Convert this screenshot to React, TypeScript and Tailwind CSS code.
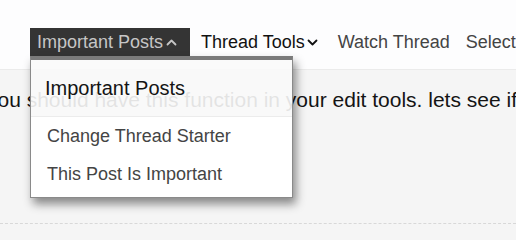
import React from 'react'

function Chevron({ up, className }: { up?: boolean; className?: string }) {
    return (
        <svg width="11" height="7" viewBox="0 0 11 7" className={className} aria-hidden="true">
            <polyline
                points={up ? '1.5,5.5 5.5,1.5 9.5,5.5' : '1.5,1.5 5.5,5.5 9.5,1.5'}
                fill="none"
                stroke="currentColor"
                strokeWidth="1.8"
                strokeLinecap="round"
                strokeLinejoin="round"
            />
        </svg>
    )
}

export default function App() {
    return (
        <div
            className="relative h-[240px] w-[516px] overflow-hidden bg-[#f5f5f5]"
            style={{ fontFamily: '"Liberation Sans", Arial, sans-serif' }}
        >
            {/* top nav */}
            <div className="h-[70px] border-b border-[#ebebeb] bg-[#fdfdfe] pl-[30px] pt-[28px]">
                <div className="flex h-[28px] items-center whitespace-nowrap text-[18px]">
                    <div className="relative">
                        <button className="flex h-[28px] w-[160px] items-center bg-[#343434] pl-[7px] text-[#c6c6c6]">
                            Important Posts
                            <Chevron up className="ml-[3px] mt-[1px]" />
                        </button>

                        {/* dropdown, header is see-through a little */}
                        <div className="absolute left-0 top-[28px] z-10 w-[263px] border-x border-b border-t-4 border-[#8a8a8a] border-t-[#7a7a7a] shadow-[3px_6px_9px_rgba(0,0,0,0.45)]">
                            <div className="flex h-[57px] items-center border-b border-[#ececec] bg-[#fafafa]/90 pl-[14px] text-[20px] text-[#141414]">
                                Important Posts
                            </div>
                            <div className="bg-white pb-[4px] pl-[16px] text-[18px] text-[#444]">
                                <div className="flex h-[38px] items-center">Change Thread Starter</div>
                                <div className="flex h-[38px] items-center">This Post Is Important</div>
                            </div>
                        </div>
                    </div>

                    <span className="ml-[11px] flex items-center text-[#111]">
                        Thread Tools
                        <Chevron className="ml-[2px] mt-[1px]" />
                    </span>
                    <span className="ml-[20px] text-[#444]">Watch Thread</span>
                    <span className="ml-[16px] text-[#444]">Select Posts</span>
                </div>
            </div>

            {/* post body */}
            <div className="mt-[18px] ml-[-13px] whitespace-nowrap text-[21px] leading-[24px] text-[#141414]">
                you should have this function in your edit tools. lets see if it works
            </div>

            <div className="mt-[111px] border-b border-dashed border-[#d8d8d8]" />
        </div>
    )
}
